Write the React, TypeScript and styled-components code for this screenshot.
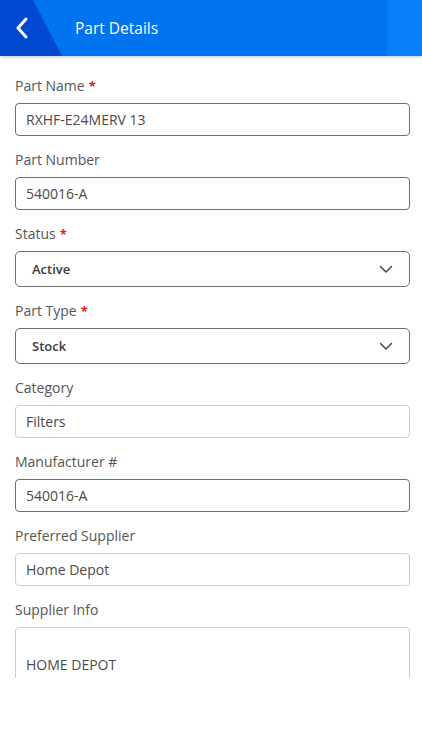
import styled, { createGlobalStyle } from 'styled-components';

const GlobalStyle = createGlobalStyle`
  html, body {
    margin: 0;
    padding: 0;
    background: #fff;
    font-family: "Open Sans", "Noto Sans", sans-serif;
  }
  * { box-sizing: border-box; }
`;

type FieldData = {
  label: string;
  value: string;
  required?: boolean;
  kind: 'input' | 'select' | 'area';
  light?: boolean;
};

const fields: FieldData[] = [
  { label: 'Part Name', value: 'RXHF-E24MERV 13', required: true, kind: 'input' },
  { label: 'Part Number', value: '540016-A', kind: 'input' },
  { label: 'Status', value: 'Active', required: true, kind: 'select' },
  { label: 'Part Type', value: 'Stock', required: true, kind: 'select' },
  { label: 'Category', value: 'Filters', kind: 'input', light: true },
  { label: 'Manufacturer #', value: '540016-A', kind: 'input' },
  { label: 'Preferred Supplier', value: 'Home Depot', kind: 'input', light: true },
  { label: 'Supplier Info', value: 'HOME DEPOT', kind: 'area', light: true },
];

export default function App() {
  return (
    <>
      <GlobalStyle />
      <Screen>
        <Header>
          <BackButton aria-label="Back">
            <svg width="14" height="22" viewBox="0 0 14 22" fill="none">
              <polyline points="11,2 3,11 11,20" stroke="#fff" strokeWidth="3" strokeLinecap="round" strokeLinejoin="round" />
            </svg>
          </BackButton>
          <Title>Part Details</Title>
        </Header>
        <Scroll>
          {fields.map((f) => (
            <Field key={f.label}>
              <Label>
                {f.label}
                {f.required && <Star>*</Star>}
              </Label>
              {f.kind === 'select' ? (
                <SelectBox>
                  <span>{f.value}</span>
                  <svg width="14" height="9" viewBox="0 0 14 9" fill="none">
                    <polyline points="1.5,1.5 7,7 12.5,1.5" stroke="#444" strokeWidth="1.5" strokeLinecap="round" strokeLinejoin="round" />
                  </svg>
                </SelectBox>
              ) : f.kind === 'area' ? (
                <AreaBox>{f.value}</AreaBox>
              ) : (
                <InputBox $light={f.light}>{f.value}</InputBox>
              )}
            </Field>
          ))}
        </Scroll>
        <Footer />
      </Screen>
    </>
  );
}

const Screen = styled.div`
  width: 422px;
  height: 750px;
  display: flex;
  flex-direction: column;
  background: #fff;
  overflow: hidden;
`;

const Header = styled.div`
  position: relative;
  height: 56px;
  flex: none;
  display: flex;
  align-items: center;
  background: #0073ee;
  box-shadow: 0 1px 3px rgba(60, 90, 140, 0.35);
  z-index: 2;

  &::before {
    content: '';
    position: absolute;
    inset: 0;
    width: 64px;
    background: #0049d0;
    clip-path: polygon(0 0, 33px 0, 62px 100%, 0 100%);
  }

  &::after {
    content: '';
    position: absolute;
    top: 0;
    bottom: 0;
    left: 387px;
    right: 0;
    background: #0a7ffa;
  }
`;

const BackButton = styled.div`
  position: relative;
  z-index: 1;
  width: 34px;
  margin-left: 15px;
  display: flex;
  align-items: center;
`;

const Title = styled.div`
  position: relative;
  z-index: 1;
  margin-left: 26px;
  color: #fff;
  font-size: 15.5px;
`;

const Scroll = styled.div`
  height: 622px;
  flex: none;
  overflow: hidden;
  padding: 20px 12px 0 15px;
  display: flex;
  flex-direction: column;
  gap: 14px;
`;

const Field = styled.div`
  display: flex;
  flex-direction: column;
`;

const Label = styled.div`
  font-size: 14px;
  line-height: 20px;
  color: #555;
  margin-bottom: 7px;
`;

const Star = styled.span`
  color: #e0201c;
  font-size: 13px;
  font-weight: 700;
  margin-left: 4px;
`;

const InputBox = styled.div<{ $light?: boolean }>`
  height: 33px;
  border: 1px solid ${(p) => (p.$light ? '#cdcdcd' : '#6e6e6e')};
  border-radius: 4px;
  padding: 0 10px;
  display: flex;
  align-items: center;
  font-size: 14px;
  color: #4a4a4a;
`;

const SelectBox = styled.div`
  height: 36px;
  border: 1px solid #6e6e6e;
  border-radius: 5px;
  padding: 0 16px 0 16px;
  display: flex;
  align-items: center;
  justify-content: space-between;
  font-size: 13px;
  font-weight: 600;
  color: #3a3a3a;
`;

const AreaBox = styled.div`
  height: 80px;
  flex: none;
  border: 1px solid #cdcdcd;
  border-radius: 4px;
  padding: 27px 10px 0;
  font-size: 14px;
  color: #4a4a4a;
`;

const Footer = styled.div`
  flex: 1;
  background: #fff;
`;
